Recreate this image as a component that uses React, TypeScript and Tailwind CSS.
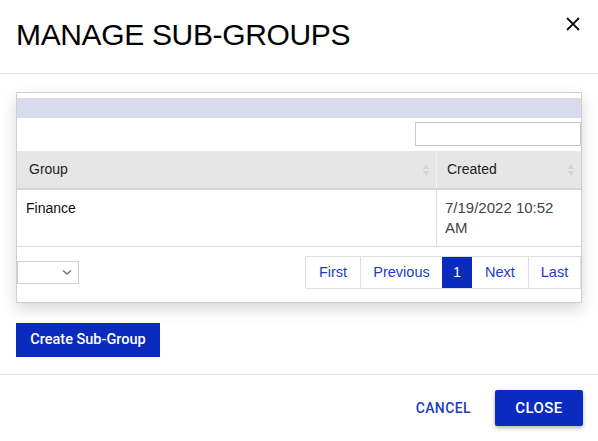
import React from "react";

const SortIcon = () => (
  <svg width="8" height="14" viewBox="0 0 8 14" className="shrink-0">
    <path d="M4 1 L7.5 6 L0.5 6 Z" fill="#d4d4d4" />
    <path d="M4 13 L7.5 8 L0.5 8 Z" fill="#d4d4d4" />
  </svg>
);

export default function App() {
  const blue = "#0a2bbe";
  return (
    <div
      className="w-[598px] h-[441px] bg-white overflow-hidden text-[#222]"
      style={{ fontFamily: '"Liberation Sans", Arial, sans-serif' }}
    >
      {/* Header */}
      <div className="h-[74px] border-b border-[#e3e3e3] flex justify-between pl-4 pr-[18px]">
        <h1 className="mt-[16px] text-[30px] leading-[38px] font-normal text-black tracking-[-0.35px]">
          MANAGE SUB-GROUPS
        </h1>
        <button className="mt-[17px] w-[14px] h-[14px]" aria-label="Close">
          <svg width="14" height="14" viewBox="0 0 14 14">
            <path d="M1 1 L13 13 M13 1 L1 13" stroke="#111" strokeWidth="1.8" />
          </svg>
        </button>
      </div>

      {/* Body */}
      <div className="px-4 pt-[18px] pb-[17px] border-b border-[#e3e3e3]">
        <div className="border border-[#cfcfcf] shadow-[0_6px_14px_rgba(0,0,0,0.16)] pt-[5px] pb-[13px]">
          <div className="h-[20px] bg-[#d6daea]" />
          <div className="flex justify-end pt-[4px] pb-[5px]">
            <input className="w-[166px] h-[24px] border border-[#c8c8c8] outline-none" />
          </div>
          {/* Table */}
          <div className="flex h-[39px] bg-[#e6e6e6] border-b-2 border-[#d6d6d6] text-[14px]">
            <div className="w-[420px] flex items-center justify-between pl-[12px] pr-[6px] border-r border-[#f2f2f2]">
              <span>Group</span>
              <SortIcon />
            </div>
            <div className="flex-1 flex items-center justify-between pl-[10px] pr-[6px]">
              <span>Created</span>
              <SortIcon />
            </div>
          </div>
          <div className="flex border-b border-[#dcdcdc]">
            <div className="w-[420px] pl-[9px] py-[8px] leading-[20px] text-[14px] border-r border-[#dcdcdc] text-[#111]">
              Finance
            </div>
            <div className="flex-1 pl-[8px] pr-[20px] py-[8px] leading-[20px] text-[15px] text-[#444]">
              7/19/2022 10:52 AM
            </div>
          </div>
          {/* Footer */}
          <div className="flex items-center justify-between pt-[9px]">
            <div className="w-[62px] h-[23px] border border-[#cfcfcf] flex items-center justify-end pr-[6px]">
              <svg width="10" height="7" viewBox="0 0 10 7">
                <path d="M1 1.5 L5 5 L9 1.5" stroke="#777" strokeWidth="1.6" fill="none" />
              </svg>
            </div>
            <div className="flex h-[33px] border border-[#dedede] text-[14.5px] text-[#1b3cc3]">
              <div className="w-[55px] flex items-center justify-center border-r border-[#dedede]">First</div>
              <div className="w-[81px] flex items-center justify-center">Previous</div>
              <div className="w-[30px] flex items-center justify-center text-white bg-[#0a2bbe]">1</div>
              <div className="w-[57px] flex items-center justify-center border-r border-[#dedede]">Next</div>
              <div className="w-[51px] flex items-center justify-center">Last</div>
            </div>
          </div>
        </div>
        <button
          className="mt-[20px] w-[144px] h-[34px] text-white text-[14.5px] font-medium"
          style={{ backgroundColor: blue, fontFamily: "Roboto, Arial, sans-serif" }}
        >
          Create Sub-Group
        </button>
      </div>

      {/* Footer */}
      <div
        className="flex justify-end items-center gap-[24px] pt-[15px] pr-[15px]"
        style={{ fontFamily: "Roboto, Arial, sans-serif" }}
      >
        <button className="text-[14px] font-medium tracking-[0.4px] text-[#1b3cc3]">CANCEL</button>
        <button
          className="w-[88px] h-[36px] text-white text-[15px] font-medium tracking-[0.4px] rounded-[2px] shadow-[0_2px_4px_rgba(0,0,0,0.3)]"
          style={{ backgroundColor: blue }}
        >
          CLOSE
        </button>
      </div>
    </div>
  );
}
